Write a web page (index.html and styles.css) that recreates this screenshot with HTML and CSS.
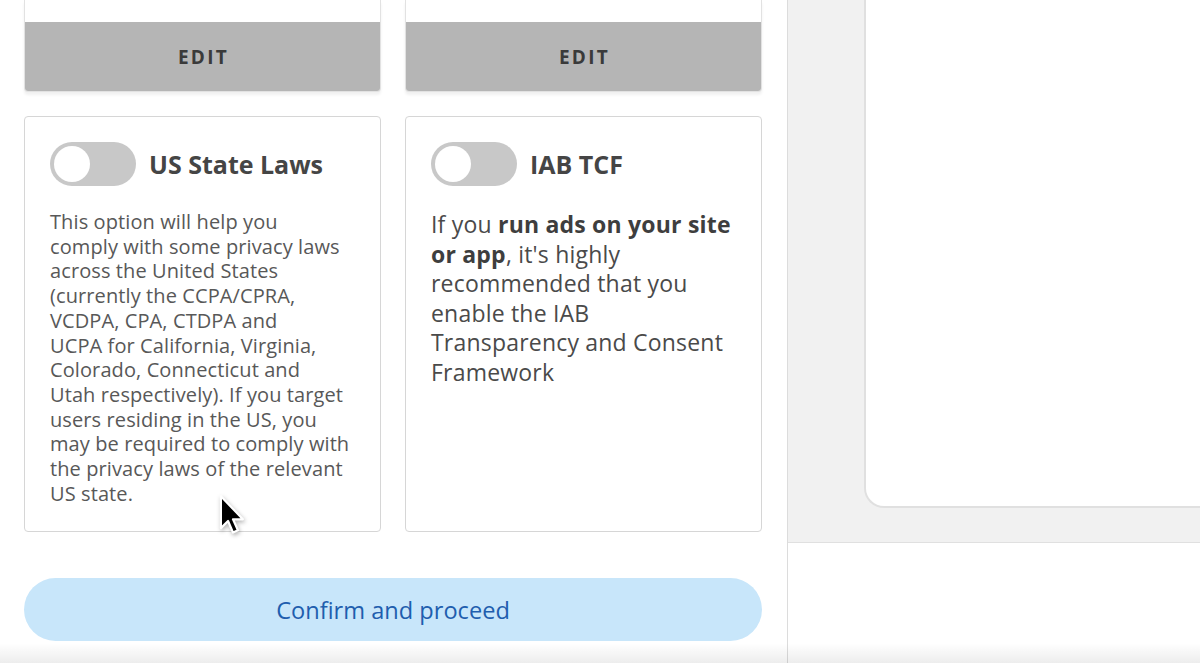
FILE: index.html
```html
<!DOCTYPE html>
<html lang="en">
<head>
  <meta charset="UTF-8">
  <title>Privacy settings</title>
  <link rel="stylesheet" href="styles.css">
</head>
<body>
  <div class="window">
    <div class="panel">
      <div class="grid">
        <div class="card card-top">
          <div class="card-body-cut"></div>
          <div class="edit-bar">EDIT</div>
        </div>
        <div class="card card-top">
          <div class="card-body-cut"></div>
          <div class="edit-bar">EDIT</div>
        </div>

        <div class="card option">
          <div class="option-head">
            <span class="toggle"><span class="knob"></span></span>
            <h2>US State Laws</h2>
          </div>
          <!-- line breaks kept as in the design copy -->
          <p class="desc">This option will help you<br>
            comply with some privacy laws<br>
            across the United States<br>
            (currently the CCPA/CPRA,<br>
            VCDPA, CPA, CTDPA and<br>
            UCPA for California, Virginia,<br>
            Colorado, Connecticut and<br>
            Utah respectively). If you target<br>
            users residing in the US, you<br>
            may be required to comply with<br>
            the privacy laws of the relevant<br>
            US state.</p>
        </div>
        <div class="card option">
          <div class="option-head">
            <span class="toggle"><span class="knob"></span></span>
            <h2>IAB TCF</h2>
          </div>
          <p class="desc desc-large">If you <strong>run ads on your site or app</strong>, it's highly recommended that you enable the IAB Transparency and Consent Framework</p>
        </div>
      </div>

      <button class="confirm">Confirm and proceed</button>
    </div>

    <div class="side">
      <div class="preview">
        <div class="preview-card"></div>
      </div>
      <div class="side-foot"></div>
    </div>
  </div>
  <div class="shade"></div>

  <svg class="cursor" width="30" height="44" viewBox="0 0 26 40">
    <path d="M2 2 L2 31 L8.5 24.5 L13 35 L17.5 33 L13 23 L22 23 Z" fill="#000" stroke="#fff" stroke-width="2" stroke-linejoin="round"/>
  </svg>
</body>
</html>
```

FILE: styles.css
```css
html, body {
  margin: 0;
  height: 100%;
  overflow: hidden;
}
body {
  font-family: "Open Sans", Roboto, sans-serif;
  background: #ffffff;
  color: #555;
  position: relative;
}
.window {
  display: flex;
  height: 663px;
}
.panel {
  width: 788px;
  box-sizing: border-box;
  border-right: 1px solid #dcdcdc;
  padding: 0 26px 0 24px;
  background: #fff;
}
.grid {
  display: grid;
  grid-template-columns: 357px 357px;
  column-gap: 24px;
  row-gap: 24px;
}
.card {
  border: 1px solid #d6d6d6;
  border-radius: 4px;
  background: #fff;
  box-sizing: border-box;
}
.card-top {
  border-top: none;
  border-radius: 0 0 4px 4px;
  border-color: #e2e2e2;
  box-shadow: 0 3px 3px rgba(0,0,0,0.06);
}
.card-body-cut {
  height: 22px;
}
.edit-bar {
  height: 69px;
  background: #b5b5b5;
  border-radius: 0 0 3px 3px;
  display: flex;
  align-items: center;
  justify-content: center;
  font-family: "Open Sans", sans-serif;
  font-weight: 700;
  font-size: 19px;
  letter-spacing: 2.3px;
  color: #3a3a3a;
  padding-left: 2px;
}
.option {
  height: 416px;
  padding: 25px 22px 0 25px;
}
.option-head {
  display: flex;
  align-items: center;
  gap: 13px;
}
.toggle {
  width: 86px;
  height: 44px;
  border-radius: 22px;
  background: #c8c8c8;
  display: flex;
  align-items: center;
  padding-left: 4px;
  box-sizing: border-box;
  flex-shrink: 0;
}
.knob {
  width: 36px;
  height: 36px;
  border-radius: 50%;
  background: #fff;
}
.option h2 {
  margin: 0;
  font-family: "Open Sans", sans-serif;
  font-weight: 700;
  font-size: 25px;
  color: #454545;
}
.desc {
  margin: 24px -12px 0 0;
  font-size: 20px;
  letter-spacing: 0.1px;
  line-height: 24.7px;
  color: #585858;
  white-space: nowrap;
}
.desc-large {
  margin: 24px 0 0;
  font-size: 23px;
  letter-spacing: 0.2px;
  line-height: 29.6px;
  color: #4a4a4a;
  white-space: normal;
}
.desc-large strong {
  color: #3e3e3e;
}
.confirm {
  display: block;
  width: 738px;
  height: 63px;
  margin-top: 46px;
  border: none;
  border-radius: 32px;
  background: #c8e6fa;
  color: #1f5eae;
  font-family: "Open Sans", sans-serif;
  font-size: 23.6px;
  padding: 0;
}
.side {
  flex: 1;
  display: flex;
  flex-direction: column;
}
.preview {
  height: 543px;
  background: #f1f1f1;
  border-bottom: 1px solid #e0e0e0;
  box-sizing: border-box;
  padding-left: 76px;
  overflow: hidden;
}
.preview-card {
  height: 506px;
  background: #fff;
  border: 2px solid #e0e0e0;
  border-top: none;
  border-right: none;
  border-radius: 0 0 0 20px;
}
.side-foot {
  flex: 1;
  background: #fff;
}
.shade {
  position: absolute;
  left: 0;
  right: 0;
  bottom: 0;
  height: 20px;
  background: linear-gradient(to bottom, rgba(0,0,0,0), rgba(0,0,0,0.07));
  pointer-events: none;
}
.cursor {
  position: absolute;
  left: 218px;
  top: 494px;
  filter: drop-shadow(1px 2px 2px rgba(0,0,0,0.3));
}
```
